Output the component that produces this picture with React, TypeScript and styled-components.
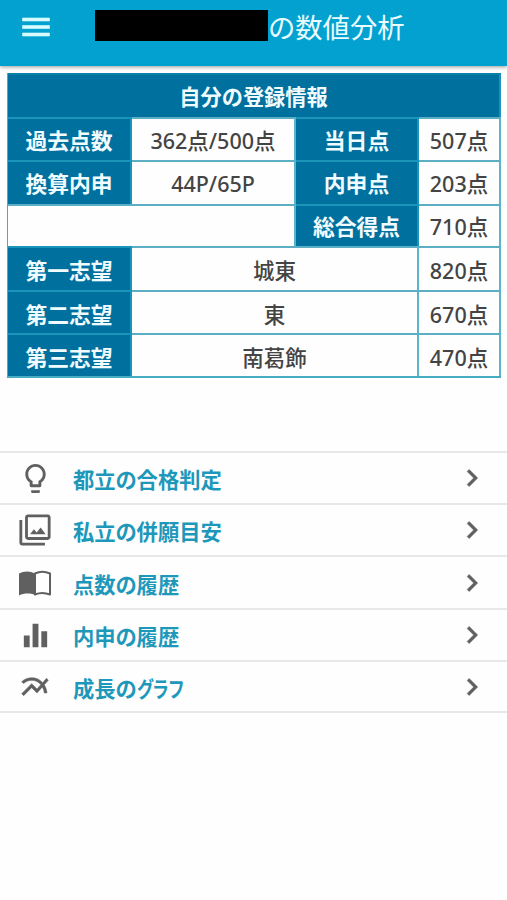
import React from "react";
import styled, { createGlobalStyle, css } from "styled-components";
import {
  MdMenu,
  MdLightbulbOutline,
  MdOutlineFilter,
  MdEqualizer,
  MdMultilineChart,
  MdChevronRight,
} from "react-icons/md";

const GlobalStyle = createGlobalStyle`
  * { box-sizing: border-box; }
  body {
    margin: 0;
    background: #fefefe;
    font-family: "Noto Sans", "Noto Sans CJK JP", sans-serif;
  }
`;

const heavierGlyph = css`
  path:not([fill="none"]) {
    stroke: currentColor;
    stroke-width: 0.4px;
  }
  path[fill="none"] {
    stroke: none;
  }
`;

const Page = styled.div`
  width: 507px;
  height: 900px;
  overflow: hidden;
  background: #fefefe;
`;

const Header = styled.header`
  display: flex;
  height: 66px;
  padding: 9px 0 0 18px;
  background: #02a1d0;
  box-shadow: 0 1px 4px rgba(0, 0, 0, 0.4);
`;

const MenuButton = styled.button`
  display: flex;
  width: 36px;
  height: 36px;
  padding: 0;
  border: 0;
  background: none;
  color: #d8fbff;
  ${heavierGlyph}
`;

const Redacted = styled.span`
  width: 173px;
  height: 31px;
  margin: 1px 0 0 41px;
  background: #000;
`;

const Title = styled.h1`
  margin: 0;
  font-family: "Noto Sans CJK JP", sans-serif;
  font-size: 27.3px;
  font-weight: 400;
  line-height: 35px;
  color: #e9fcff;
`;

const Table = styled.section`
  display: grid;
  grid-template-columns: 124px 164px 123px 82px;
  grid-template-rows: 44px 43px 44px 42px 44px 43px 43px;
  width: 494px;
  margin: 7px 0 0 7px;
  border: solid #48abc4;
  border-width: 0 0 2px 1px;
`;

const Cell = styled.div<{ $head?: boolean; $span?: number; $low?: boolean }>`
  display: flex;
  align-items: center;
  justify-content: center;
  grid-column: span ${(p) => p.$span ?? 1};
  padding-top: ${(p) => (p.$low ? 4 : 2)}px;
  border: solid ${(p) => (p.$head ? "#1b94b9" : "#5cb4cb")};
  border-width: 2px 2px 0 0;
  border-top-color: ${(p) => (p.$head ? "#1b94b9" : "#5caec5")};
  background: ${(p) => (p.$head ? "#00719e" : "#fefefe")};
  color: ${(p) => (p.$head ? "#f0fcff" : "#444")};
  font-size: ${(p) => (p.$head ? 21.8 : 21.5)}px;
  font-weight: ${(p) => (p.$head ? 700 : 500)};
  line-height: 30px;
  white-space: nowrap;
`;

const Caption = styled(Cell)`
  border-top-color: #0980aa;
  font-size: 21.2px;
`;

const Menu = styled.nav`
  display: grid;
  grid-template-rows: 52px 52px 53px 52px 51px;
  margin-top: 73px;
  border-bottom: 2px solid #e8e8e8;
`;

const MenuRow = styled.a`
  display: grid;
  grid-template-columns: 73px 1fr 36px;
  align-items: center;
  padding-right: 16px;
  border-top: 2px solid #e8e8e8;
  color: #1e98ba;
`;

const IconSlot = styled.span`
  display: flex;
  justify-content: center;
  padding-right: 3px;
  color: #606060;
`;

const Label = styled.span`
  padding-top: 2px;
  font-family: "Noto Sans CJK JP", sans-serif;
  font-feature-settings: "palt";
  font-size: 21.3px;
  font-weight: 700;
  line-height: 30px;
`;

const Kana = styled.span`
  display: inline-block;
  transform: scaleX(0.8);
  transform-origin: left;
`;

const ChartIcon = styled(MdMultilineChart)`
  ${heavierGlyph}
`;

const Chevron = styled(MdChevronRight)`
  color: #606060;
  ${heavierGlyph}
`;

const Book = () => (
  <svg width="34" height="28" viewBox="0 0 34 28" fill="none">
    <path d="M1 4.500C6 1.800 12 1.800 17 4.500V26C12 24 6 24 1 26.500Z" fill="currentColor" />
    <path
      d="M17 4.500C21.500 2.300 27 2.300 32 4.500V25.500C27 23.500 21.500 23.500 17 25.500Z"
      stroke="currentColor"
      strokeWidth="2"
      strokeLinejoin="round"
    />
  </svg>
);

const rows = [
  { id: "metropolitan", icon: <MdLightbulbOutline size={35} />, text: "都立の合格判定" },
  { id: "private", icon: <MdOutlineFilter size={34} />, text: "私立の併願目安" },
  { id: "scores", icon: <Book />, text: "点数の履歴" },
  { id: "reports", icon: <MdEqualizer size={35} />, text: "内申の履歴" },
  { id: "growth", icon: <ChartIcon size={32} />, text: "成長の", kana: "グラフ" },
];

const choices = [
  ["第一志望", "城東", "820点"],
  ["第二志望", "東", "670点"],
  ["第三志望", "南葛飾", "470点"],
];

export default function App() {
  return (
    <Page>
      <GlobalStyle />
      <Header>
        <MenuButton aria-label="メニュー">
          <MdMenu size={36} />
        </MenuButton>
        <Redacted />
        <Title>の数値分析</Title>
      </Header>
      <Table>
        <Caption $head $span={4}>自分の登録情報</Caption>
        <Cell $head>過去点数</Cell>
        <Cell>362点/500点</Cell>
        <Cell $head>当日点</Cell>
        <Cell>507点</Cell>
        <Cell $head>換算内申</Cell>
        <Cell>44P/65P</Cell>
        <Cell $head>内申点</Cell>
        <Cell>203点</Cell>
        <Cell $span={2} />
        <Cell $head>総合得点</Cell>
        <Cell>710点</Cell>
        {choices.map(([rank, school, score]) => (
          <React.Fragment key={rank}>
            <Cell $head $low>{rank}</Cell>
            <Cell $span={2} $low>{school}</Cell>
            <Cell $low>{score}</Cell>
          </React.Fragment>
        ))}
      </Table>
      <Menu>
        {rows.map((row) => (
          <MenuRow key={row.id}>
            <IconSlot>{row.icon}</IconSlot>
            <Label>
              {row.text}
              {row.kana && <Kana>{row.kana}</Kana>}
            </Label>
            <Chevron size={34} />
          </MenuRow>
        ))}
      </Menu>
    </Page>
  );
}
